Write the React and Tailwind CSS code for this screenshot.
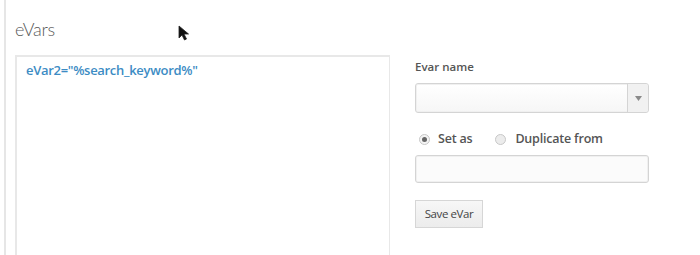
import React from "react";

export default function App() {
  return (
    <div className="w-[700px] h-[255px] bg-white overflow-hidden relative" style={{ fontFamily: "'Open Sans', sans-serif" }}>
      <div className="ml-[4px] h-full border-l-2 border-[#e6e6e6] pl-[9px] pt-[18px]">
        <div className="text-[18px] leading-[22px] font-light text-[#5a5a5a] tracking-[-0.3px]" style={{ fontFamily: "Lato, sans-serif" }}>eVars</div>
        <div className="flex mt-[15px]">
          <div className="w-[375px] h-[220px] border-2 border-[#e8e8e8] border-r-[1.5px] px-[9px] pt-[5px]">
            <div className="text-[13px] font-semibold text-[#3c8cc4] leading-[16px] tracking-[-0.3px]">eVar2="%search_keyword%"</div>
          </div>
          <div className="ml-[25px] w-[234px] pt-[4px]">
            <div className="text-[11.5px] font-semibold text-[#555] leading-[15px]">Evar name</div>
            <div className="mt-[9px] h-[30px] flex rounded-[3px] border border-[#d4d4d4] bg-gradient-to-b from-white to-[#f6f6f6] shadow-[inset_0_0_0_1px_#f0f0f0]">
              <div className="flex-1" />
              <div className="w-[21px] border-l border-[#d4d4d4] bg-[#f1f1f1] flex items-center justify-center rounded-r-[3px]">
                <svg width="7" height="5" viewBox="0 0 7 5"><path d="M0 0 L7 0 L3.5 5 Z" fill="#8a8a8a" /></svg>
              </div>
            </div>
            <div className="mt-[19px] flex items-center h-[14px] text-[12.5px] font-semibold text-[#555] tracking-[-0.2px]">
              <span className="ml-[4px] w-[11px] h-[11px] rounded-full border border-[#c8c8c8] bg-[#f4f4f4] flex items-center justify-center">
                <span className="w-[5px] h-[5px] rounded-full bg-[#666]" />
              </span>
              <span className="ml-[8px]">Set as</span>
              <span className="ml-[23px] w-[11px] h-[11px] rounded-full border border-[#c8c8c8] bg-[#ececec]" />
              <span className="ml-[9px]">Duplicate from</span>
            </div>
            <div className="mt-[9px] h-[28px] rounded-[3px] border border-[#d4d4d4] bg-[#fbfbfb] shadow-[inset_0_0_0_1px_#f0f0f0]" />
            <div className="mt-[17px] w-[68px] h-[28px] border border-[#d6d6d6] bg-gradient-to-b from-[#f7f7f7] to-[#ececec] flex items-center justify-center text-[11.5px] text-[#444] tracking-[-0.4px]">Save eVar</div>
          </div>
        </div>
      </div>
      <svg className="absolute left-[178px] top-[25px]" width="12" height="17" viewBox="0 0 12 17">
        <path d="M1 1 L1 13 L4 10 L6.5 15 L8.5 14 L6 9 L10.5 9 Z" fill="#111" stroke="#222" strokeWidth="0.8" />
      </svg>
    </div>
  );
}
